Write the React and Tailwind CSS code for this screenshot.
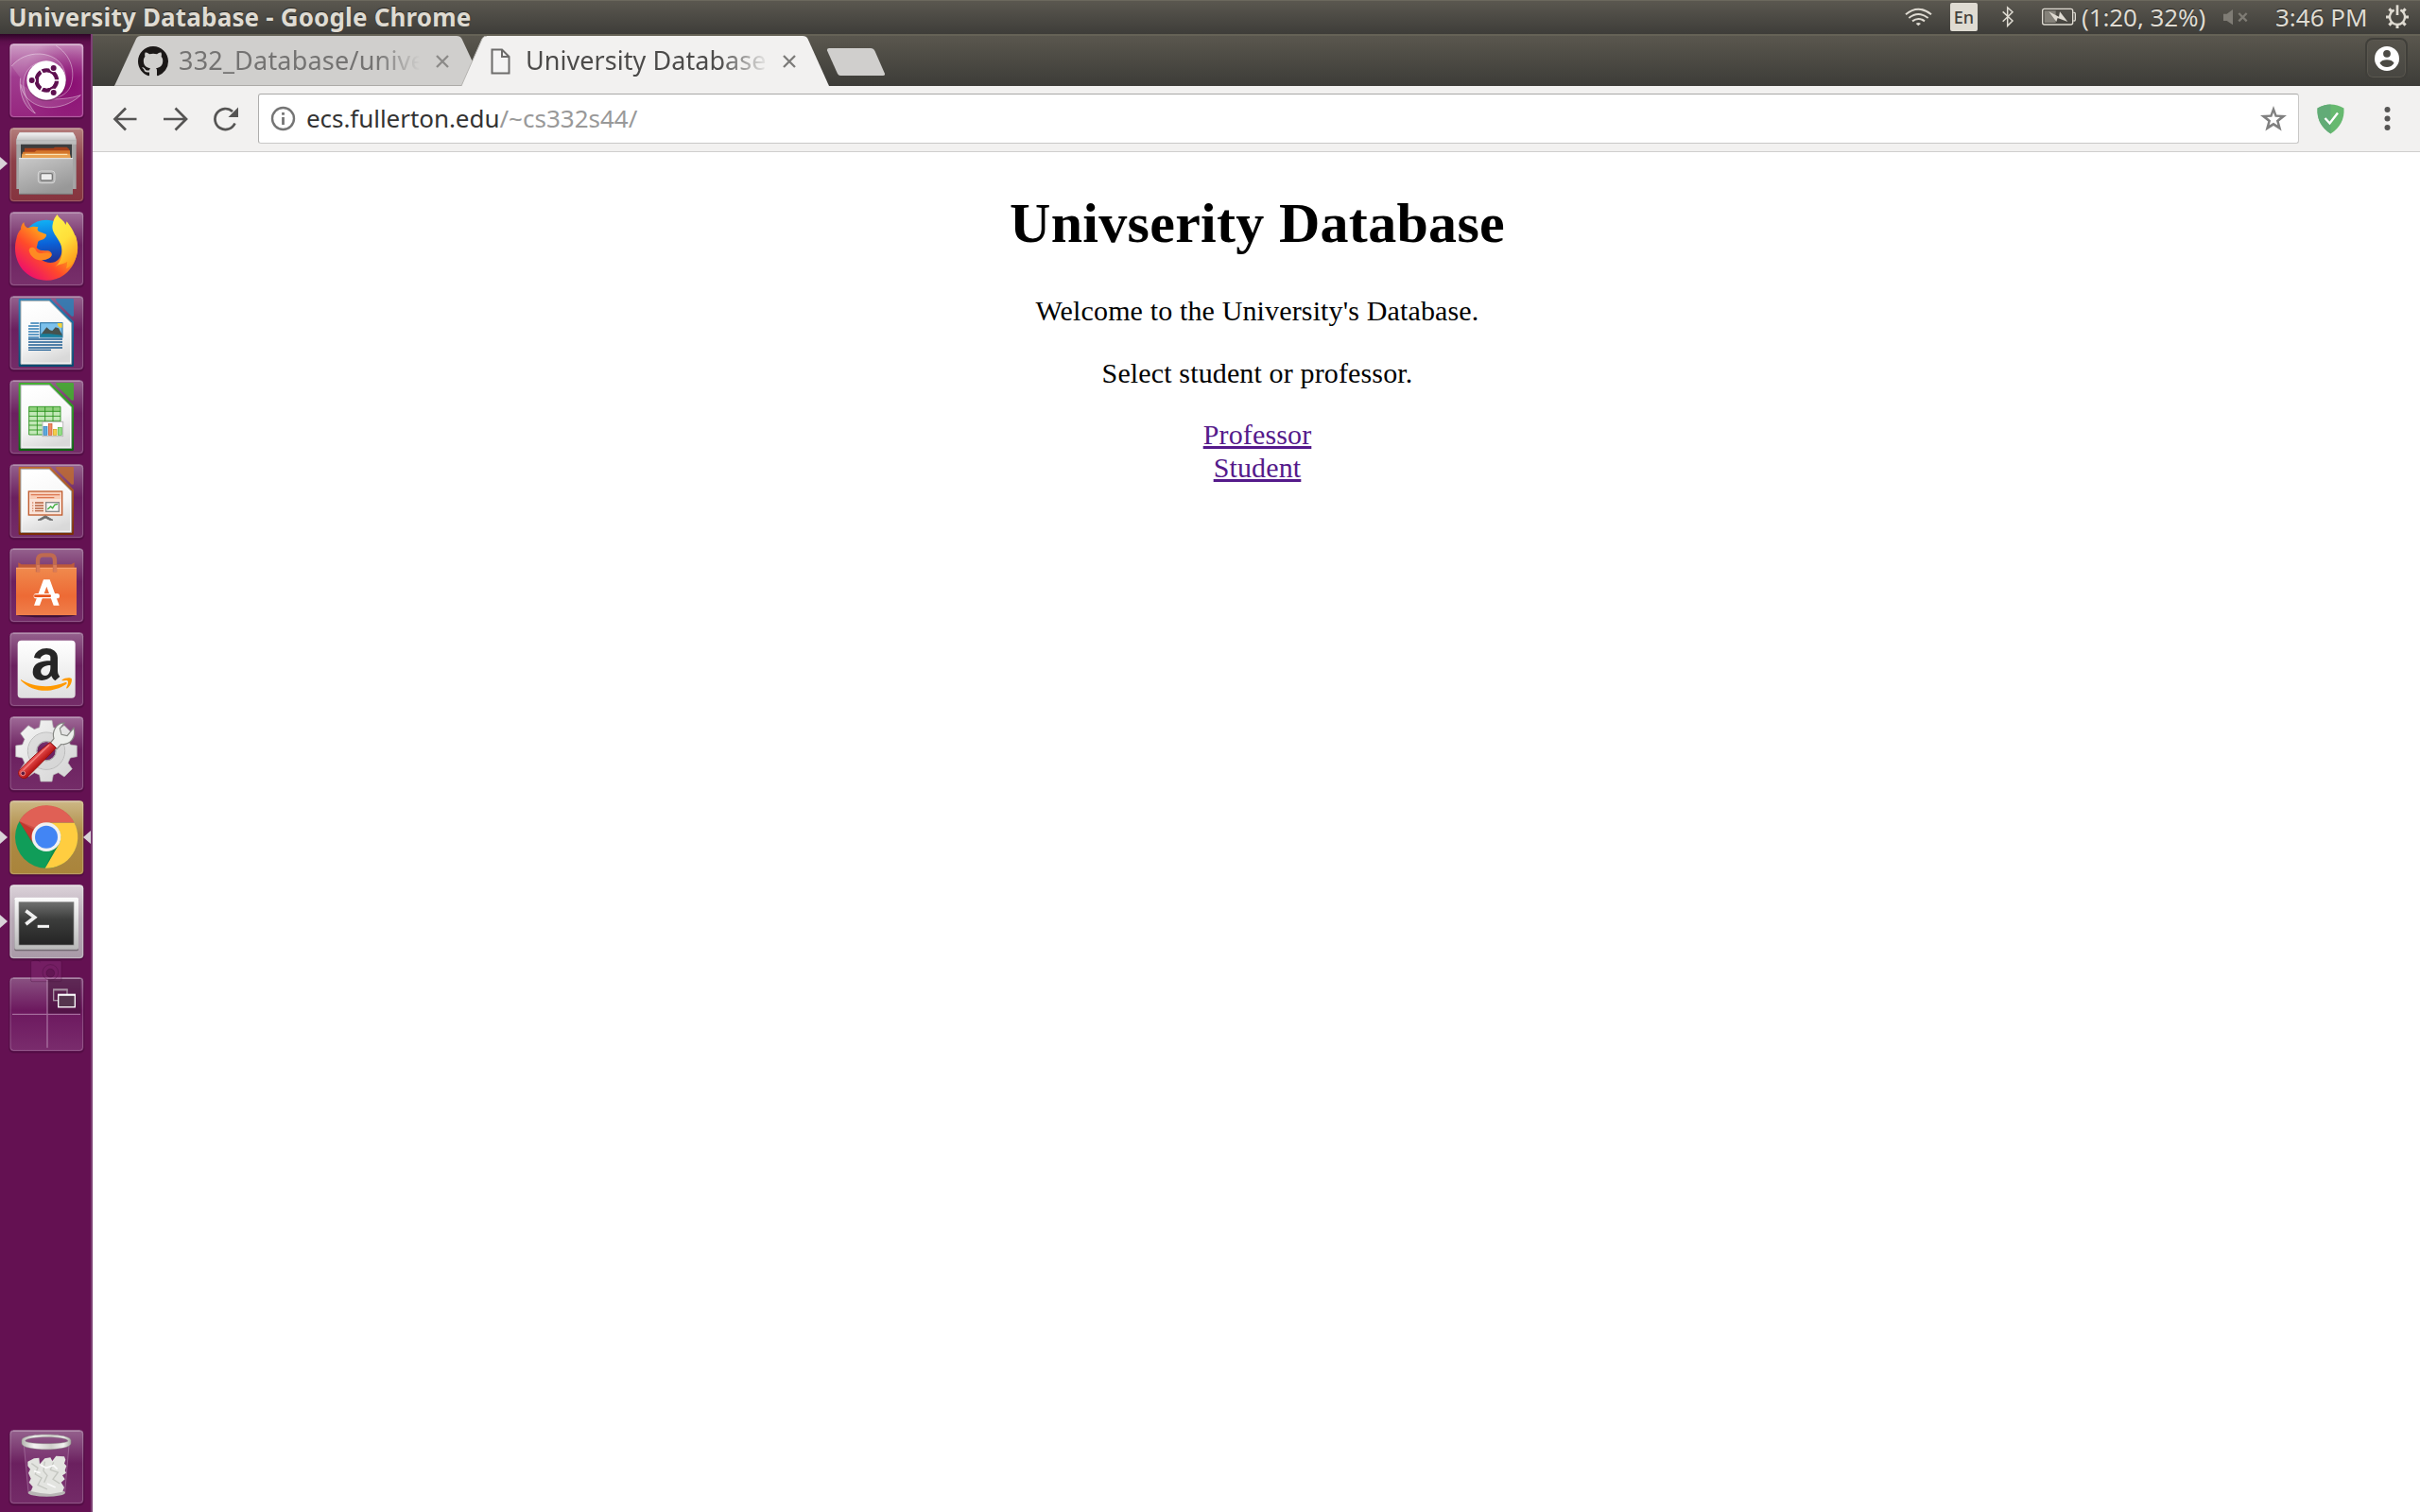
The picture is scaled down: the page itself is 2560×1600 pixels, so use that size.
import React from "react";

const UI = "font-['Noto_Sans',sans-serif]";

/* ---------- Launcher tile frame ---------- */

function Tile({ top, id, from, mid, to, edgeOpacity = 0.2, className = "", children }) {
  return (
    <svg className={"block h-[79px] w-[79px] shrink-0 overflow-visible " + className} viewBox={`30 ${top} 237 237`}>
      <defs>
        <linearGradient id={id} x1="0" y1="0" x2="0" y2="1">
          <stop offset="0" stopColor={from} />
          <stop offset="0.45" stopColor={mid} />
          <stop offset="1" stopColor={to} />
        </linearGradient>
      </defs>
      <rect x="27" y={top + 1} width="242" height="241" rx="16" fill="#2d0526" opacity="0.16" />
      <rect x="29" y={top + 1} width="238" height="238" rx="14" fill="#2d0526" opacity="0.2" />
      <rect x="31" y={top + 1} width="234" height="234" rx="12" fill={`url(#${id})`} />
      <rect x="33.5" y={top + 3.5} width="229" height="229" rx="10" fill="none" stroke="#fff" strokeOpacity={edgeOpacity} strokeWidth="3" />
      <path d={`M42 ${top + 3.5}H254`} stroke="#fff" strokeOpacity="0.3" strokeWidth="3" />
      {children}
    </svg>
  );
}

function UbuntuIcon() {
  return (
    <Tile top={30} id="t-dash" from="#cf9fc6" mid="#a03c8f" to="#96267f" edgeOpacity={0.25}>
      <defs>
        <radialGradient id="dash-glow" cx="0.85" cy="0.55" r="0.7">
          <stop offset="0" stopColor="#84006a" stopOpacity="0.75" />
          <stop offset="1" stopColor="#84006a" stopOpacity="0" />
        </radialGradient>
      </defs>
      <rect x="36" y="36" width="223" height="223" rx="8" fill="url(#dash-glow)" />
      <g fill="#fff" fillOpacity="0.13" stroke="#fff" strokeOpacity="0.4" strokeWidth="3">
        <path d="M37 102C58 76 90 62 126 63C176 66 210 96 208 148C190 90 130 70 92 110C60 146 76 206 112 252C72 230 60 180 65 140" />
        <path d="M178 37C220 64 240 110 226 160C212 204 160 212 120 196" fill="none" />
        <path d="M66 160C70 200 110 236 164 233C204 231 236 214 256 194C222 206 180 208 150 206" />
      </g>
      <circle cx="148" cy="150" r="63" fill="#3d0833" opacity="0.35" />
      <circle cx="147" cy="147" r="62" fill="#fff" />
      <circle cx="148" cy="147" r="32" fill="none" stroke="#5e1150" strokeWidth="13" />
      <g stroke="#fff" strokeWidth="5">
        <path d="M148 147H192M148 147L126 109M148 147L126 185" />
      </g>
      <circle cx="148" cy="147" r="25" fill="#fff" />
      <g fill="#5e1150" stroke="#fff" strokeWidth="4">
        <circle cx="101" cy="147" r="11" />
        <circle cx="170" cy="108" r="11" />
        <circle cx="170" cy="186" r="11" />
      </g>
    </Tile>
  );
}

function FilesIcon() {
  return (
    <Tile top={297} id="t-files" from="#b57f7c" mid="#8d3f48" to="#86343f">
      <defs>
        <linearGradient id="files-front" x1="0" y1="0" x2="0.5" y2="1">
          <stop offset="0" stopColor="#c9c9c9" />
          <stop offset="1" stopColor="#989898" />
        </linearGradient>
        <linearGradient id="files-top" x1="0" y1="0" x2="0" y2="1">
          <stop offset="0" stopColor="#f4f4f4" />
          <stop offset="1" stopColor="#c4c4c4" />
        </linearGradient>
      </defs>
      <path d="M62 313H232L242 335V492H52V335Z" fill="#a5a5a5" />
      <path d="M62 313H232Q240 322 242 337H52Q54 322 62 313Z" fill="url(#files-top)" />
      <path d="M52 337H242V350H52Z" fill="#bdbdbd" />
      <path d="M66 350H228V396H66Z" fill="#3c3d3e" />
      <path d="M78 362H170L174 359H212L220 366V392H76Z" fill="#a3401a" />
      <path d="M72 374H110L116 370H222V394H70Z" fill="#d5762c" />
      <path d="M70 380H222L225 394H68Z" fill="#e9a254" />
      <path d="M80 382H214" stroke="#fff0c8" strokeWidth="3" />
      <path d="M60 394H231V508H60Z" fill="url(#files-front)" />
      <path d="M60 395H231" stroke="#eeeeee" strokeWidth="3" />
      <path d="M60 508H231" stroke="#777" strokeWidth="3" />
      <rect x="121" y="435" width="53" height="38" rx="9" fill="#b4b4b4" stroke="#d6d6d6" strokeWidth="3" />
      <rect x="129" y="443" width="37" height="22" rx="4" fill="#ededed" stroke="#777" strokeWidth="4" />
    </Tile>
  );
}

function FirefoxIcon() {
  return (
    <Tile top={564} id="t-ff" from="#a2709a" mid="#6d2260" to="#78306b">
      <defs>
        <linearGradient id="ff-body" x1="0.85" y1="0.1" x2="0.15" y2="0.85">
          <stop offset="0" stopColor="#ffd23a" />
          <stop offset="0.35" stopColor="#ff9a1c" />
          <stop offset="0.65" stopColor="#ff4a2a" />
          <stop offset="1" stopColor="#ee1269" />
        </linearGradient>
        <linearGradient id="ff-globe" x1="0.4" y1="0" x2="0.5" y2="1">
          <stop offset="0" stopColor="#10b2f5" />
          <stop offset="0.5" stopColor="#0b62d8" />
          <stop offset="1" stopColor="#28217c" />
        </linearGradient>
        <linearGradient id="ff-tail" x1="0.2" y1="0" x2="0.6" y2="1">
          <stop offset="0" stopColor="#fff04a" />
          <stop offset="0.5" stopColor="#ffe03a" />
          <stop offset="1" stopColor="#ff9a1a" />
        </linearGradient>
      </defs>
      <circle cx="147" cy="666" r="76" fill="url(#ff-globe)" />
      <path d="M76 597C76 606 80 612 88 616C98 611 112 610 121 613C117 620 119 624 124 627L147 636C148 646 138 653 124 656C118 660 120 670 116 677C124 690 140 686 152 688C160 690 166 696 164 701C154 712 142 712 128 714C158 738 196 726 197 684C197 668 190 658 184 650L240 640C256 690 238 740 204 764C166 792 112 786 80 756C50 728 42 684 52 650C54 636 60 626 66 620C66 610 70 602 76 597Z" fill="url(#ff-body)" />
      <path d="M112 682C100 672 92 680 92 688C98 712 120 722 140 717C156 714 164 706 164 701C158 692 142 694 132 696C122 697 114 692 112 682Z" fill="#ff8a22" />
      <path d="M182 573C190 590 204 590 208 606L212 595C226 614 240 634 246 668C250 706 232 736 210 745C214 732 212 730 214 722C200 732 190 728 176 738C196 722 202 690 192 666C180 640 160 628 168 600C170 588 176 580 182 573Z" fill="url(#ff-tail)" />
    </Tile>
  );
}

function OfficeTile({ top, id, dark, light, children }) {
  const t = top;
  return (
    <Tile top={t} id={"t-" + id} from="#95628e" mid="#6b205f" to="#742c68">
      <defs>
        <linearGradient id={id + "-edge"} x1="0" y1="0" x2="0" y2="1">
          <stop offset="0" stopColor={light} />
          <stop offset="1" stopColor={dark} />
        </linearGradient>
        <linearGradient id={id + "-paper"} x1="0.3" y1="0" x2="0.6" y2="1">
          <stop offset="0" stopColor="#ffffff" />
          <stop offset="0.6" stopColor="#f6f6f6" />
          <stop offset="1" stopColor="#d9d9d9" />
        </linearGradient>
      </defs>
      <path d={`M62 ${t + 9}H160L234 ${t + 82}V${t + 221}Q234 ${t + 225} 230 ${t + 225}H62Q59 ${t + 225} 59 ${t + 221}V${t + 12}Q59 ${t + 9} 62 ${t + 9}Z`} fill={`url(#${id}-edge)`} />
      <path d={`M66 ${t + 16}H156L227 ${t + 87}V${t + 217}H66Z`} fill="#fff" stroke="#a9aeb0" strokeWidth="3" />
      <path d={`M70 ${t + 20}H153L222 ${t + 90}V${t + 212}H70Z`} fill={`url(#${id}-paper)`} />
      <path d={`M178 ${t + 9}H230Q234 ${t + 9} 234 ${t + 13}V${t + 62}Q232 ${t + 68} 226 ${t + 64}L180 ${t + 18}Q176 ${t + 12} 178 ${t + 9}Z`} fill={light} opacity="0.85" />
      {children}
    </Tile>
  );
}

function WriterIcon() {
  return (
    <OfficeTile top={39} id="writer" dark="#064a70" light="#2b80b6">
      <g stroke="#2f7cb4" strokeWidth="4">
        <path d="M97 126H124M90 135H124M90 144H124M90 153H124M90 162H124M90 171H124" />
      </g>
      <g stroke="#1d5c93" strokeWidth="4">
        <path d="M90 177H198M90 186H198M90 195H198M90 204H198M90 211H162" />
      </g>
      <rect x="128" y="125" width="70" height="46" fill="#7cc1ec" stroke="#1d6a9e" strokeWidth="3" />
      <path d="M182 126H197V140Q184 142 182 126Z" fill="#f5d33c" />
      <path d="M130 162L148 139L158 148L166 150L176 139L186 142L197 162V168H130Z" fill="#47524e" />
      <path d="M130 160H160L197 164V170H130Z" fill="#177f9c" />
    </OfficeTile>
  );
}

function CalcIcon() {
  return (
    <OfficeTile top={306} id="calc" dark="#0d6410" light="#3fb02c">
      <rect x="92" y="391" width="100" height="89" fill="#c3e8b8" />
      <rect x="92" y="391" width="100" height="15" fill="#8fd07c" />
      <path d="M92 391H192V480H92ZM118 391V480M143 391V480M168 391V480M92 406H192M92 421H192M92 436H192M92 450H192M92 465H192" fill="none" stroke="#259018" strokeWidth="2.6" />
      <rect x="135" y="439" width="65" height="46" fill="#fff" stroke="#b9b9b9" strokeWidth="3" />
      <rect x="138" y="454" width="12" height="27" fill="#5fa8dc" stroke="#2b7ab8" strokeWidth="2" />
      <rect x="154" y="445" width="11" height="36" fill="#ee8a63" stroke="#cc5126" strokeWidth="2" />
      <rect x="169" y="463" width="11" height="18" fill="#f5cf4d" stroke="#d19e14" strokeWidth="2" />
      <rect x="184" y="457" width="12" height="24" fill="#93dd86" stroke="#4fb341" strokeWidth="2" />
    </OfficeTile>
  );
}

function ImpressIcon() {
  return (
    <OfficeTile top={573} id="impress" dark="#7a2e08" light="#bd6a31">
      <path d="M120 751L144 737L168 751H158L144 744L130 751Z" fill="#666" stroke="#777" strokeWidth="3" />
      <rect x="91" y="660" width="106" height="75" fill="#fae3d8" stroke="#c05a2c" strokeWidth="4" />
      <path d="M98 671H190M117 680H172" stroke="#c8431a" strokeWidth="3" />
      <rect x="95" y="664" width="98" height="20" fill="#f3a27d" opacity="0.35" />
      <path d="M111 696H138M111 705H138M111 714H138M111 722H138" stroke="#b5623e" strokeWidth="4" />
      <path d="M102 696H106M102 705H106M102 714H106M102 722H106" stroke="#d98d6c" strokeWidth="4" />
      <rect x="146" y="695" width="41" height="29" fill="#f5f5f5" stroke="#8b8b8b" strokeWidth="4" />
      <path d="M151 717L161 708L167 713L174 702L183 700" fill="none" stroke="#3fae3d" strokeWidth="4" />
    </OfficeTile>
  );
}

function SoftwareIcon() {
  return (
    <Tile top={30} id="t-soft" from="#95628e" mid="#6b205f" to="#742c68">
      <defs>
        <linearGradient id="bag" x1="0" y1="0" x2="0" y2="1">
          <stop offset="0" stopColor="#f08a4d" />
          <stop offset="0.6" stopColor="#ed6a35" />
          <stop offset="1" stopColor="#ef7f4b" />
        </linearGradient>
      </defs>
      <ellipse cx="147" cy="242" rx="94" ry="8" fill="#200118" opacity="0.6" />
      <path d="M58 76L68 82H226L236 76V96H58Z" fill="#bf5a39" />
      <rect x="51" y="92" width="192" height="151" fill="url(#bag)" />
      <path d="M51 94H243" stroke="#f8a474" strokeWidth="3" />
      <path d="M120 106V70Q120 52 136 52H160Q174 52 174 70V106" fill="none" stroke="#bf6a50" strokeWidth="13" />
      <path d="M116 84H126V106H116ZM169 84H180V106H169Z" fill="#d97b58" />
      <path d="M138 130H158L188 212H170L148 152L126 212H108Z" fill="#fff" />
      <rect x="107" y="174" width="82" height="16" rx="8" fill="#fff" />
      <path d="M112 182H158" stroke="#e8541b" strokeWidth="8" strokeLinecap="round" />
    </Tile>
  );
}

function AmazonIcon() {
  return (
    <Tile top={297} id="t-amz" from="#95628e" mid="#6b205f" to="#742c68">
      <defs>
        <linearGradient id="amz" x1="0" y1="0" x2="0" y2="1">
          <stop offset="0" stopColor="#ffffff" />
          <stop offset="0.5" stopColor="#f1f1f1" />
          <stop offset="1" stopColor="#dfdfdf" />
        </linearGradient>
      </defs>
      <rect x="56" y="323" width="183" height="183" rx="12" fill="url(#amz)" />
      <path d="M108 378L128 381C130 367 156 362 160 374V388C130 388 104 394 104 424C104 454 146 458 163 436C166 443 170 447 175 451L190 438C184 431 183 426 183 418V378C183 338 114 338 108 378ZM160 402C161 418 158 434 143 435C124 434 122 402 160 402Z" fill="#262626" />
      <path d="M66 447C110 474 164 474 208 456C212 455 214 459 210 462C166 492 104 490 66 450Z" fill="#ff9900" />
      <path d="M196 449C206 441 222 440 227 444C230 452 224 468 214 475C211 477 210 475 211 472C216 462 218 454 214 451C210 449 202 451 197 451Z" fill="#ff9900" />
    </Tile>
  );
}

function SettingsIcon() {
  return (
    <Tile top={564} id="t-set" from="#a06b98" mid="#6b205f" to="#742c68">
      <defs>
        <linearGradient id="gear" x1="0" y1="0" x2="1" y2="1">
          <stop offset="0" stopColor="#f6f6f6" />
          <stop offset="1" stopColor="#d2d2d2" />
        </linearGradient>
        <linearGradient id="handle" x1="0.3" y1="0.3" x2="0.7" y2="0.7">
          <stop offset="0.3" stopColor="#e85050" />
          <stop offset="0.7" stopColor="#b81616" />
        </linearGradient>
      </defs>
      <g transform="translate(147 674)">
        <path
          fillRule="evenodd"
          d="M-18 -97H18L22 -75L38 -69L57 -81L82 -56L69 -37L76 -20L97 -17V18L76 22L69 38L82 57L57 82L38 69L22 76L18 97H-18L-22 76L-38 69L-57 82L-82 57L-69 38L-76 22L-97 18V-17L-76 -20L-69 -37L-82 -56L-57 -81L-38 -69L-22 -75ZM0 -30A30 30 0 1 0 0 30A30 30 0 1 0 0 -30Z"
          fill="url(#gear)"
          stroke="#b3b3b3"
          strokeWidth="2"
        />
        <circle r="59" fill="none" stroke="#b9b9b9" strokeWidth="3" />
        <circle r="45" fill="none" stroke="#d2d2d2" strokeWidth="26" opacity="0.6" />
        <circle r="31" fill="none" stroke="#aaa" strokeWidth="3" />
      </g>
      <path d="M160 648L171 635C164 610 180 585 204 585L190 603L195 622L213 626L234 601C243 632 222 655 194 653L180 668Z" fill="#eceeeb" stroke="#858783" strokeWidth="3.500" />
      <path d="M159 647L178 664C150 694 116 728 88 756C74 770 51 752 61 736C90 706 124 674 159 647Z" fill="url(#handle)" stroke="#971111" strokeWidth="3" />
      <path d="M156 655L74 735" stroke="#ff9a94" strokeWidth="4" opacity="0.7" />
      <circle cx="73" cy="745" r="7" fill="#5c1a3e" stroke="#ef8d8d" strokeWidth="3" />
    </Tile>
  );
}

function ChromeIcon() {
  return (
    <Tile top={37} id="t-chrome" from="#cdb886" mid="#ad8a44" to="#a9843b">
      <circle cx="147" cy="153" r="99" fill="#109d59" />
      <path d="M61 103A99 99 0 0 1 236 108H147L108 176Z" fill="#dc4a3e" />
      <path d="M61 103L104 176A44 44 0 0 1 112 124Z" fill="#b0271f" opacity="0.55" />
      <path d="M236 108A99 99 0 0 1 143 252L187 176A46 46 0 0 0 147 108Z" fill="#ffcd40" />
      <path d="M143 252L187 176L170 190Z" fill="#0b7a42" opacity="0.5" />
      <path d="M61 103A99 99 0 0 1 236 108H147Q118 112 108 130Z" fill="#fff" opacity="0.12" />
      <circle cx="147" cy="153" r="46" fill="#f1f1f1" />
      <circle cx="147" cy="153" r="36" fill="#4285f4" />
    </Tile>
  );
}

function TerminalIcon() {
  return (
    <Tile top={304} id="t-term" from="#dcd3da" mid="#b8aab6" to="#a99aa8" edgeOpacity={0.3}>
      <defs>
        <linearGradient id="term" x1="0" y1="0" x2="0" y2="1">
          <stop offset="0" stopColor="#6f706f" />
          <stop offset="0.4" stopColor="#3c3d3c" />
          <stop offset="1" stopColor="#242424" />
        </linearGradient>
        <linearGradient id="term-f" x1="0" y1="0" x2="0" y2="1">
          <stop offset="0" stopColor="#fbfbfb" />
          <stop offset="1" stopColor="#b9b9b9" />
        </linearGradient>
      </defs>
      <rect x="46" y="348" width="203" height="167" rx="5" fill="#766d75" />
      <rect x="46" y="345" width="203" height="165" rx="5" fill="url(#term-f)" />
      <rect x="60" y="360" width="174" height="136" fill="url(#term)" stroke="#8a8a8a" strokeWidth="2" />
      <path d="M82 387L110 408L82 430" fill="none" stroke="#f0f0f0" strokeWidth="11" />
      <path d="M119 437H156" stroke="#f5f5f5" strokeWidth="9" />
    </Tile>
  );
}

function WorkspaceIcon() {
  return (
    <Tile top={598} id="t-ws" from="#8a5282" mid="#6c185e" to="#7a2c6d" className="mt-[19px]">
      <g fill="none" stroke="#3c0731" strokeOpacity="0.3" strokeWidth="3">
        <rect x="98" y="546" width="97" height="66" rx="4" fill="#9c3f8c" fillOpacity="0.3" />
        <circle cx="160" cy="583" r="25" />
        <circle cx="160" cy="585" r="13" fill="#3c0731" fillOpacity="0.3" />
        <path d="M104 546Q116 538 128 550" />
      </g>
      <rect x="151" y="604" width="106" height="110" fill="#431039" opacity="0.6" />
      <path d="M150 606V822M39 716H255" stroke="#c9a2c4" strokeOpacity="0.6" strokeWidth="4" />
      <rect x="170" y="638" width="43" height="34" fill="none" stroke="#a692a2" strokeWidth="4" />
      <path d="M168 638H215" stroke="#a692a2" strokeWidth="6" />
      <rect x="185" y="654" width="53" height="39" fill="#55354e" stroke="#fff" strokeWidth="4" />
      <path d="M183 654H240" stroke="#fff" strokeWidth="6" />
    </Tile>
  );
}

function TrashIcon() {
  return (
    <Tile top={69} id="t-trash" from="#95628e" mid="#6b205f" to="#742c68" className="mb-2 mt-auto">
      <defs>
        <linearGradient id="rim" x1="0" y1="0" x2="1" y2="0">
          <stop offset="0" stopColor="#b5b5b0" />
          <stop offset="0.25" stopColor="#f4f4f2" />
          <stop offset="0.6" stopColor="#cfcfca" />
          <stop offset="0.85" stopColor="#f2f2f0" />
          <stop offset="1" stopColor="#aaaaa5" />
        </linearGradient>
      </defs>
      <path d="M76 118L90 268Q148 288 206 268L219 118Z" fill="#8b4b84" fillOpacity="0.4" stroke="#c7a2c3" strokeOpacity="0.6" strokeWidth="2" />
      <ellipse cx="148" cy="269" rx="59" ry="12" fill="#b8b6b5" />
      <path d="M88 170L108 160L124 158L126 178L142 160L160 157L166 168L178 152L204 154L208 164L204 176L211 184L206 198L210 206L198 214L206 226L194 236L204 252L198 266L160 273L128 270L98 264L104 250L92 236L98 224L90 206L96 194L88 184Z" fill="#e3e4e0" />
      <path d="M100 176L120 190L112 210L132 222L120 244L150 258M170 172L160 196L184 204L168 226L190 240M142 170L138 200L150 214L140 236" fill="none" stroke="#c4c6c0" strokeWidth="4" />
      <path d="M128 180L146 190L170 182L182 194M108 200L128 206M150 240L176 252" stroke="#fafafa" strokeWidth="5" fill="none" />
      <path fillRule="evenodd" d="M69 103C69 78 225 78 225 103V112C225 138 69 138 69 112ZM80 104C84 116 212 116 216 104C212 88 84 88 80 104Z" fill="url(#rim)" stroke="#8f8f8a" strokeWidth="1.5" />
    </Tile>
  );
}

function Pip({ flip = false, className }) {
  return (
    <svg className={"absolute h-[14px] w-[8px] " + className} viewBox="0 0 8 14">
      <path d={flip ? "M8 0V14L0 7Z" : "M0 0V14L8 7Z"} fill="#d9d3d8" />
    </svg>
  );
}

function Launcher() {
  return (
    <aside className="relative flex w-[98px] shrink-0 flex-col gap-[10px] border-r-2 border-[#7c4074] bg-[#641152] bg-[linear-gradient(#2f0427_0px,#5c0f4b_8px,#641152_14px)] pl-[10px] pt-[10px]">
      <UbuntuIcon />
      <FilesIcon />
      <FirefoxIcon />
      <WriterIcon />
      <CalcIcon />
      <ImpressIcon />
      <SoftwareIcon />
      <AmazonIcon />
      <SettingsIcon />
      <ChromeIcon />
      <TerminalIcon />
      <div className="-mt-[10px]">
        <WorkspaceIcon />
      </div>
      <TrashIcon />
      <Pip className="left-0 top-[130px]" />
      <Pip className="left-0 top-[843px]" />
      <Pip className="left-0 top-[932px]" />
      <Pip flip className="right-0 top-[843px]" />
    </aside>
  );
}

/* ---------- Top panel ---------- */

function TopPanel() {
  return (
    <header className={"flex h-9 shrink-0 items-center whitespace-pre bg-linear-to-b from-[#5b5850] to-[#3e3d39] text-[26px] leading-9 text-[#dfdbd2] shadow-[inset_0_1px_0_#6b685d] [text-shadow:0_-1px_1px_#2b2a27] " + UI}>
      <h1 className="ml-[9px] font-bold tracking-[0.17px]">University Database - Google Chrome</h1>
      <svg className="ml-auto mr-[19px] h-9 w-[29px]" viewBox="45 0 87 108" fill="none" stroke="#dfdbd2">
        <path d="M48 46Q88 12 129 46M58 57Q88 33 119 57M69 67Q88 53 108 67" strokeWidth="6" />
        <path d="M80 75Q88 69 96 75L88 82Z" fill="#dfdbd2" stroke="none" />
      </svg>
      <div className="mr-[26px] h-[30px] w-[29px] rounded-[2px] bg-[#dfdbd2] text-center text-[18px] font-medium leading-[30px] text-[#43413c] [text-shadow:none]">En</div>
      <svg className="mr-[29px] h-9 w-[13px]" viewBox="354 0 39 108" fill="none" stroke="#dfdbd2">
        <path d="M356 37L387 66L371 82V24L387 38L356 68" strokeWidth="4.500" />
      </svg>
      <svg className="mr-[6px] h-9 w-[36px]" viewBox="480 0 108 108" fill="none" stroke="#dfdbd2">
        <rect x="482" y="28" width="96" height="50" rx="6" strokeWidth="4" />
        <rect x="488" y="34" width="36" height="38" fill="#85827a" stroke="none" />
        <path d="M580 40H583Q586 40 586 44V62Q586 66 583 66H580" strokeWidth="4" />
        <path d="M502 37L534 53L537 37L562 69L530 57L526 69Z" fill="#dfdbd2" stroke="none" />
      </svg>
      <span className="mr-[17px] w-[132px] tracking-[-0.1px]">(1:20, 32%)</span>
      <svg className="mr-[29px] h-9 w-[27px]" viewBox="273 0 81 108" fill="none">
        <path d="M276 44H287L306 30V79L287 66H276Z" fill="#7f7c75" />
        <path d="M325 42L350 67M350 42L325 67" stroke="#7f7c75" strokeWidth="7" />
      </svg>
      <span className="mr-[18px] w-[98px]">3:46 PM</span>
      <svg className="mr-[11px] h-9 w-[26px]" viewBox="788 0 78 108" fill="none" stroke="#dfdbd2">
        <g transform="translate(827 54)">
          <path d="M10 -22A24 24 0 1 1 -10 -22" strokeWidth="7" />
          <path d="M0 -38V-6" strokeWidth="8" />
          <path d="M24 0H36M-24 0H-36M0 24V36M17 17L26 26M-17 17L-26 26M17 -17L26 -26M-17 -17L-26 -26" strokeWidth="9" />
        </g>
      </svg>
    </header>
  );
}

/* ---------- Browser chrome ---------- */

function CloseX({ className }) {
  return (
    <svg className={"h-[14px] w-[14px] " + className} viewBox="0 0 14 14">
      <path d="M1 1L13 13M13 1L1 13" stroke="currentColor" strokeWidth="2.3" fill="none" />
    </svg>
  );
}

function TabStrip() {
  return (
    <div className={"flex h-[55px] shrink-0 items-start border-t-2 border-[#656256] bg-linear-to-b from-[#5a574e] to-[#3d3c38] " + UI}>
      <div className="relative ml-[23px] flex h-[53px] w-[391px] items-center">
        <svg className="absolute inset-0 h-full w-full" viewBox="0 0 391 53">
          <path d="M0 53L23 3Q24.500 0 28 0H362Q366 0 367.500 3L391 53Z" fill="#d0cfcd" />
          <path d="M0 52.500H391" stroke="#acaaa7" />
        </svg>
        <svg className="relative ml-[25px] h-[32px] w-[32px] shrink-0" viewBox="0 0 16 16">
          <path fill="#1b1817" d="M8 0C3.580 0 0 3.580 0 8c0 3.540 2.290 6.530 5.470 7.590.4.070.55-.17.55-.38 0-.19-.01-.82-.01-1.490-2.010.37-2.530-.49-2.690-.94-.09-.23-.48-.94-.82-1.130-.28-.15-.68-.52-.01-.53.63-.01 1.080.58 1.230.82.72 1.210 1.870.87 2.330.66.07-.52.28-.87.51-1.070-1.780-.2-3.640-.89-3.640-3.950 0-.87.31-1.590.82-2.150-.08-.2-.36-1.020.08-2.120 0 0 .67-.21 2.200.82.64-.18 1.320-.27 2-.27s1.360.09 2 .27c1.530-1.040 2.200-.82 2.200-.82.44 1.100.16 1.920.08 2.120.51.56.82 1.270.82 2.150 0 3.070-1.870 3.750-3.650 3.950.29.25.54.73.54 1.480 0 1.070-.01 1.930-.01 2.200 0 .21.15.46.55.38A8.010 8.010 0 0 0 16 8c0-4.420-3.580-8-8-8z" />
        </svg>
        <div className="relative ml-[11px] w-[256px] overflow-hidden whitespace-pre pb-[2px] text-[27px] leading-[48px] tracking-[0.2px] text-[#747372] [mask-image:linear-gradient(to_right,#000_210px,transparent_255px)]">
          332_Database/unive
        </div>
        <CloseX className="relative ml-[16px] text-[#8b8a88]" />
      </div>
      <div className="relative -ml-[24px] flex h-[53px] w-[389px] items-center">
        <svg className="absolute inset-0 h-full w-full" viewBox="0 0 389 53">
          <path d="M0 53L22 3Q23.500 0 27 0H361Q365 0 366.500 3L389 53Z" fill="#f2f1f0" />
          <path d="M0 53L22 3Q23.500 0 27 0" fill="none" stroke="#b5b3b0" />
        </svg>
        <svg className="relative ml-[31px] h-[28px] w-[21px] shrink-0" viewBox="0 0 21 28">
          <path d="M1.500 1.500H12L19.500 9V26.500H1.500Z" fill="#f4f4f4" stroke="#6d6c6b" strokeWidth="2" />
          <path d="M12 1.500V9H19.500" fill="none" stroke="#6d6c6b" strokeWidth="2" />
        </svg>
        <div className="relative ml-[16px] w-[258px] overflow-hidden whitespace-pre pb-[2px] text-[27px] leading-[48px] tracking-[0.05px] text-[#4c4b4a] [mask-image:linear-gradient(to_right,#000_205px,transparent_258px)]">
          University Database
        </div>
        <CloseX className="relative ml-[14px] text-[#7c7b79]" />
      </div>
      <svg className="-ml-[3px] mt-[13px] h-[30px] w-[62px]" viewBox="0 0 62 30">
        <path d="M3 0H47Q50 0 51.500 3L62 27Q62.500 29 60 29H15Q13 29 12 27L1 2.500Q0.500 0 3 0Z" fill="#d0cfcd" />
      </svg>
      <div className="ml-auto mr-[13px] mt-[2px] flex h-[44px] w-[45px] items-center justify-center rounded-[8px] border-2 border-[#403f3a] bg-linear-to-b from-[#57544c] to-[#474641] shadow-[inset_0_0_0_1px_#5a574f]">
        <svg className="h-[26px] w-[26px]" viewBox="0 0 24 24">
          <circle cx="12" cy="12" r="12" fill="#fff" />
          <circle cx="12" cy="7.200" r="3.600" fill="#4b4a44" />
          <path d="M5 16.300C7 12 17 12 19 16.300C16 21.500 8 21.500 5 16.300Z" fill="#4b4a44" />
        </svg>
      </div>
    </div>
  );
}

function Toolbar() {
  return (
    <div className={"flex h-[70px] shrink-0 items-center border-b border-[#cfcecd] bg-[#f2f1f0] " + UI}>
      <svg className="ml-[21px] h-[28px] w-[134px] shrink-0" viewBox="0 0 134 28" fill="none" stroke="#555453" strokeWidth="2.700">
        <path d="M25.500 14H3M14 2.500L2.500 14L14 25.500" />
        <path d="M54 14H77M66.500 2.500L78 14L66.500 25.500" />
        <path d="M129.500 18.500A11 11 0 1 1 127 6" />
        <path d="M133 1.500V12H122.500Z" fill="#555453" stroke="none" />
      </svg>
      <div className="ml-[20px] flex h-[53px] w-[2159px] items-center rounded-[3px] border border-b-[#c9c8c7] border-l-[#aeadac] border-r-[#c9c8c7] border-t-[#a9a8a7] bg-white">
        <svg className="ml-[12px] h-[27px] w-[27px]" viewBox="0 0 27 27" fill="none" stroke="#757575" strokeWidth="2.400">
          <circle cx="13.500" cy="13.500" r="11.500" />
          <path d="M13.500 12V20M13.500 7V9.800" strokeWidth="2.800" />
        </svg>
        <div className="ml-[11px] whitespace-pre pb-[2px] text-[26px] leading-[46px]">
          <span className="tracking-[-0.05px] text-[#333]">ecs.fullerton.edu</span>
          <span className="text-[#999]">/~cs332s44/</span>
        </div>
        <svg className="ml-auto mr-[12px] h-[27px] w-[28px]" viewBox="0 0 28 27">
          <path fillRule="evenodd" d="M14 0L17.400 9.400L28 10L19.800 16.400L22.600 26.500L14 21L5.400 26.500L8.200 16.400L0 10L10.600 9.400ZM14 7L12.300 11.800L7 12.100L11.100 15.400L9.600 20.600L14 17.800L18.400 20.600L16.900 15.400L21 12.100L15.700 11.800Z" fill="#808080" />
        </svg>
      </div>
      <svg className="ml-[18px] h-[32px] w-[31px]" viewBox="0 0 30 32">
        <path d="M15 0.500Q22 0.500 29 4.500Q30 22 15 31.500Q0 22 1 4.500Q8 0.500 15 0.500Z" fill="#67b96f" />
        <path d="M15 0.500Q8 0.500 1 4.500Q0 22 15 31.500Z" fill="#62ab77" />
        <path d="M9 15L14 20.500L22.500 9.500" fill="none" stroke="#fff" strokeWidth="2.400" />
      </svg>
      <svg className="ml-[41px] h-[27px] w-[7px]" viewBox="0 0 7 27" fill="#565554">
        <circle cx="3.500" cy="4" r="3" />
        <circle cx="3.500" cy="13.500" r="3" />
        <circle cx="3.500" cy="23" r="3" />
      </svg>
    </div>
  );
}

function Page() {
  return (
    <main className="flex flex-1 flex-col items-center bg-white pl-[2px] font-['Liberation_Serif',serif] text-[30px] leading-[35px] tracking-[0.14px] text-black">
      <h1 className="mt-[41px] text-[60px] font-bold leading-[69px] tracking-[0.3px]">Univserity Database</h1>
      <p className="mt-[40px]">Welcome to the University's Database.</p>
      <p className="mt-[31px]">Select student or professor.</p>
      <nav className="mt-[30px] flex flex-col items-center text-[#551a8b]">
        <a href="#professor" className="underline decoration-[3px] underline-offset-[2px] [text-decoration-skip-ink:none]">Professor</a>
        <a href="#student" className="underline decoration-[3px] underline-offset-[2px] [text-decoration-skip-ink:none]">Student</a>
      </nav>
    </main>
  );
}

export default function App() {
  return (
    <div className="flex h-[1600px] w-[2560px] flex-col overflow-hidden">
      <TopPanel />
      <div className="flex min-h-0 flex-1">
        <Launcher />
        <div className="flex min-w-0 flex-1 flex-col">
          <TabStrip />
          <Toolbar />
          <Page />
        </div>
      </div>
    </div>
  );
}
